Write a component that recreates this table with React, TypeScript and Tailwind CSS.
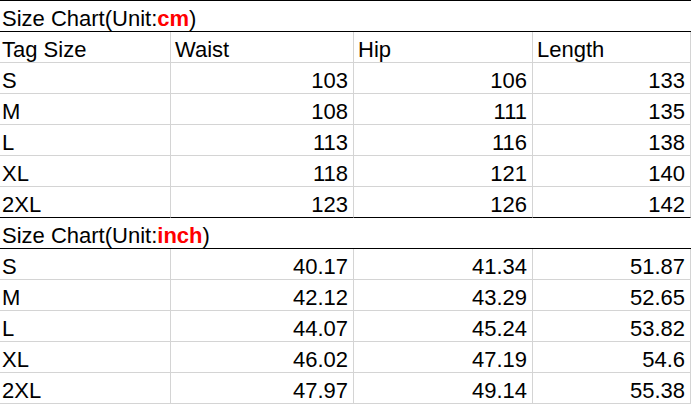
const cmRows = [
  ['S', '103', '106', '133'],
  ['M', '108', '111', '135'],
  ['L', '113', '116', '138'],
  ['XL', '118', '121', '140'],
  ['2XL', '123', '126', '142'],
];

const inchRows = [
  ['S', '40.17', '41.34', '51.87'],
  ['M', '42.12', '43.29', '52.65'],
  ['L', '44.07', '45.24', '53.82'],
  ['XL', '46.02', '47.19', '54.6'],
  ['2XL', '47.97', '49.14', '55.38'],
];

function TitleRow({ unit }: { unit: string }) {
  return (
    <div className="col-span-4 flex h-[31px] items-end border-b border-black pl-[2px] leading-[25px]">
      <span>
        Size Chart(Unit:<span className="font-bold text-[#ff0000]">{unit}</span>)
      </span>
    </div>
  );
}

function DataRow({ row, last }: { row: string[]; last?: boolean }) {
  const line = last ? 'border-b-black' : 'border-b-[#d4d4d4]';
  return (
    <>
      <div className={`flex h-[31px] items-end border-b border-r border-r-[#d4d4d4] pl-[2px] leading-[25px] ${line}`}>
        {row[0]}
      </div>
      {row.slice(1).map((v, i) => (
        <div
          key={i}
          className={`flex h-[31px] items-end justify-end border-b border-r border-r-[#d4d4d4] pr-[5px] leading-[25px] ${line}`}
        >
          {v}
        </div>
      ))}
    </>
  );
}

export default function App() {
  return (
    <div
      className="grid w-[691px] grid-cols-[171px_183px_179px_158px] border-t border-black bg-white text-[22px] text-black"
      style={{ fontFamily: '"Liberation Sans", Arial, sans-serif' }}
    >
      <TitleRow unit="cm" />

      <div className="flex h-[31px] items-end border-b border-r border-[#d4d4d4] pl-[2px] leading-[25px]">Tag Size</div>
      <div className="flex h-[31px] items-end border-b border-r border-[#d4d4d4] pl-[4px] leading-[25px]">Waist</div>
      <div className="flex h-[31px] items-end border-b border-r border-[#d4d4d4] pl-[4px] leading-[25px]">Hip</div>
      <div className="flex h-[31px] items-end border-b border-r border-[#d4d4d4] pl-[4px] leading-[25px]">Length</div>

      {cmRows.map((r, i) => (
        <DataRow key={r[0]} row={r} last={i === cmRows.length - 1} />
      ))}

      <TitleRow unit="inch" />

      {inchRows.map((r) => (
        <DataRow key={r[0]} row={r} />
      ))}
    </div>
  );
}
